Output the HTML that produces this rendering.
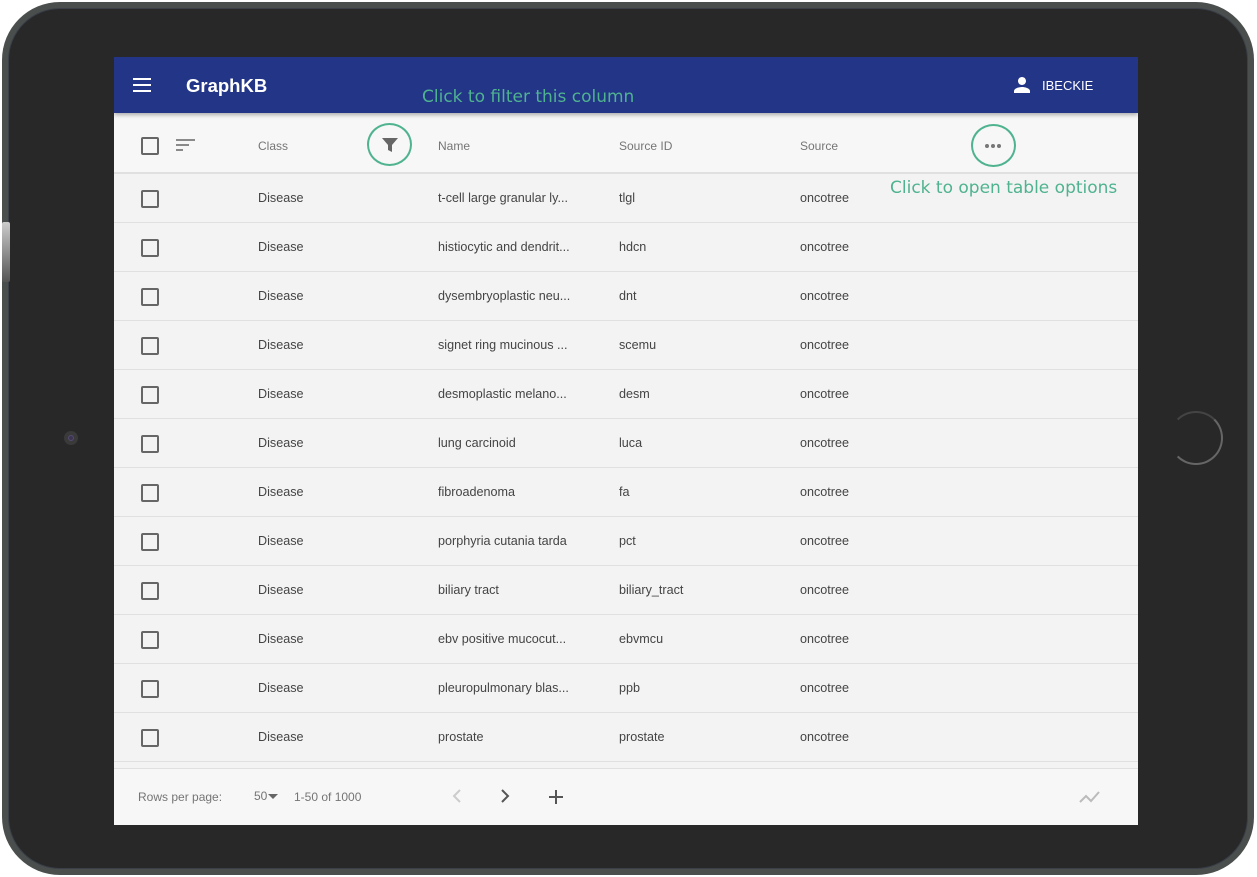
<!DOCTYPE html>
<html><head><meta charset="utf-8"><style>
*{margin:0;padding:0;box-sizing:border-box}
body{width:1257px;height:877px;background:#fff;position:relative;overflow:hidden;font-family:"Liberation Sans",Roboto,sans-serif}
.dev{position:absolute;left:2px;top:2px;width:1252px;height:873px;border-radius:58px;background:#4a4f4e}
.dev2{position:absolute;left:8px;top:8px;width:1240px;height:861px;border-radius:52px;background:#282828;border:1px solid #3a3f48}
.screen{position:absolute;left:114px;top:57px;width:1024px;height:768px;background:#f3f3f3;overflow:hidden}
.hdr{position:absolute;left:0;top:0;width:1024px;height:56px;background:#233587;box-shadow:0 2px 4px rgba(0,0,0,.3);z-index:2}
.th{position:absolute;left:0;top:56px;width:1024px;height:61px;background:#f7f7f7;border-bottom:2px solid #e0e0e0}
.t{position:absolute;font-size:12px;color:#757575}
.row{position:absolute;left:0;width:1024px;height:49px;border-bottom:1px solid #e0e0e0}
.row span{position:absolute;top:17px;font-size:12.6px;color:#444}
.cb{position:absolute;left:27px;width:18px;height:18px;border:2px solid #666;border-radius:2px}
.foot{position:absolute;left:0;top:711px;width:1024px;height:57px;background:#f7f7f7;border-top:1px solid #e0e0e0}
.ann{position:absolute;font-family:"DejaVu Sans",sans-serif;color:#4fb38f;font-size:17px;z-index:3}
.circ{position:absolute;border:2px solid #4fb38f;border-radius:50%;z-index:3}
</style></head><body>
<div class="dev"></div><div class="dev2"></div>
<div style="position:absolute;left:2px;top:222px;width:8px;height:60px;background:linear-gradient(#ccc,#555);border-radius:2px"></div>
<div style="position:absolute;left:64px;top:431px;width:14px;height:14px;border-radius:50%;background:#3a3a3a"><div style="position:absolute;left:4px;top:4px;width:6px;height:6px;border-radius:50%;background:#3d3550;border:1px solid #554a70"></div></div>
<div style="position:absolute;left:1169px;top:411px;width:54px;height:54px;border-radius:50%;border:2px solid #666;border-left-color:#282828;border-top-color:#444"></div>
<div class="screen">
<div class="hdr">
<svg style="position:absolute;left:19px;top:19px" width="18" height="18" viewBox="0 0 18 18"><path d="M0 3h18M0 9h18M0 15h18" stroke="#fff" stroke-width="2"/></svg>
<div style="position:absolute;left:72px;top:18px;color:#fff;font-size:18.5px;font-weight:bold">GraphKB</div>
<svg style="position:absolute;left:896px;top:16px" width="24" height="24" viewBox="0 0 24 24"><path fill="#fff" d="M12 12c2.2 0 4-1.8 4-4s-1.8-4-4-4-4 1.8-4 4 1.8 4 4 4zm0 2c-2.7 0-8 1.3-8 4v2h16v-2c0-2.7-5.3-4-8-4z"/></svg>
<div style="position:absolute;left:928px;top:21px;color:#fff;font-size:13px">IBECKIE</div>
</div>
<div class="ann" style="left:308px;top:30px">Click to filter this column</div>
<div class="th">
<div class="cb" style="top:24px"></div>
<svg style="position:absolute;left:62px;top:26px" width="20" height="14" viewBox="0 0 20 14"><path d="M0 1h19M0 6h13M0 11h7" stroke="#666" stroke-width="1.6"/></svg>
<div class="t" style="left:144px;top:26px">Class</div>
<div class="t" style="left:324px;top:26px">Name</div>
<div class="t" style="left:505px;top:26px">Source ID</div>
<div class="t" style="left:686px;top:26px">Source</div>
</div>
<div class="circ" style="left:253px;top:66px;width:45px;height:43px"></div>
<svg style="position:absolute;left:268px;top:80px;z-index:3" width="16" height="16" viewBox="0 0 16 16"><path fill="#666" d="M0 1h16L10 8v7l-4-2V8z"/></svg>
<div class="circ" style="left:857px;top:67px;width:45px;height:43px"></div>
<svg style="position:absolute;left:870px;top:86px;z-index:3" width="18" height="6"><circle cx="3" cy="3" r="2" fill="#777"/><circle cx="9" cy="3" r="2" fill="#777"/><circle cx="15" cy="3" r="2" fill="#777"/></svg>
<div class="ann" style="left:776px;top:121px">Click to open table options</div>
<div class="row" style="top:117px"><div class="cb" style="top:16px"></div><span style="left:144px">Disease</span><span style="left:324px">t-cell large granular ly...</span><span style="left:505px">tlgl</span><span style="left:686px">oncotree</span></div>
<div class="row" style="top:166px"><div class="cb" style="top:16px"></div><span style="left:144px">Disease</span><span style="left:324px">histiocytic and dendrit...</span><span style="left:505px">hdcn</span><span style="left:686px">oncotree</span></div>
<div class="row" style="top:215px"><div class="cb" style="top:16px"></div><span style="left:144px">Disease</span><span style="left:324px">dysembryoplastic neu...</span><span style="left:505px">dnt</span><span style="left:686px">oncotree</span></div>
<div class="row" style="top:264px"><div class="cb" style="top:16px"></div><span style="left:144px">Disease</span><span style="left:324px">signet ring mucinous ...</span><span style="left:505px">scemu</span><span style="left:686px">oncotree</span></div>
<div class="row" style="top:313px"><div class="cb" style="top:16px"></div><span style="left:144px">Disease</span><span style="left:324px">desmoplastic melano...</span><span style="left:505px">desm</span><span style="left:686px">oncotree</span></div>
<div class="row" style="top:362px"><div class="cb" style="top:16px"></div><span style="left:144px">Disease</span><span style="left:324px">lung carcinoid</span><span style="left:505px">luca</span><span style="left:686px">oncotree</span></div>
<div class="row" style="top:411px"><div class="cb" style="top:16px"></div><span style="left:144px">Disease</span><span style="left:324px">fibroadenoma</span><span style="left:505px">fa</span><span style="left:686px">oncotree</span></div>
<div class="row" style="top:460px"><div class="cb" style="top:16px"></div><span style="left:144px">Disease</span><span style="left:324px">porphyria cutania tarda</span><span style="left:505px">pct</span><span style="left:686px">oncotree</span></div>
<div class="row" style="top:509px"><div class="cb" style="top:16px"></div><span style="left:144px">Disease</span><span style="left:324px">biliary tract</span><span style="left:505px">biliary_tract</span><span style="left:686px">oncotree</span></div>
<div class="row" style="top:558px"><div class="cb" style="top:16px"></div><span style="left:144px">Disease</span><span style="left:324px">ebv positive mucocut...</span><span style="left:505px">ebvmcu</span><span style="left:686px">oncotree</span></div>
<div class="row" style="top:607px"><div class="cb" style="top:16px"></div><span style="left:144px">Disease</span><span style="left:324px">pleuropulmonary blas...</span><span style="left:505px">ppb</span><span style="left:686px">oncotree</span></div>
<div class="row" style="top:656px"><div class="cb" style="top:16px"></div><span style="left:144px">Disease</span><span style="left:324px">prostate</span><span style="left:505px">prostate</span><span style="left:686px">oncotree</span></div>
<div class="foot">
<div class="t" style="left:24px;top:21px">Rows per page:</div>
<div class="t" style="left:140px;top:20px">50</div>
<svg style="position:absolute;left:154px;top:25px" width="10" height="6"><path d="M0 0h10L5 5z" fill="#666"/></svg>
<div class="t" style="left:180px;top:21px">1-50 of 1000</div>
<svg style="position:absolute;left:338px;top:20px" width="10" height="14"><path d="M8 1L2 7l6 6" stroke="#ccc" stroke-width="2" fill="none"/></svg>
<svg style="position:absolute;left:386px;top:20px" width="10" height="14"><path d="M2 1l6 6-6 6" stroke="#555" stroke-width="2" fill="none"/></svg>
<svg style="position:absolute;left:434px;top:20px" width="16" height="16"><path d="M8 1v14M1 8h14" stroke="#555" stroke-width="2"/></svg>
<svg style="position:absolute;left:964px;top:21px" width="24" height="14"><path d="M2 12l6-6 5 5 8-9" stroke="#bbb" stroke-width="2" fill="none"/></svg>
</div>
</div>
</body></html>
